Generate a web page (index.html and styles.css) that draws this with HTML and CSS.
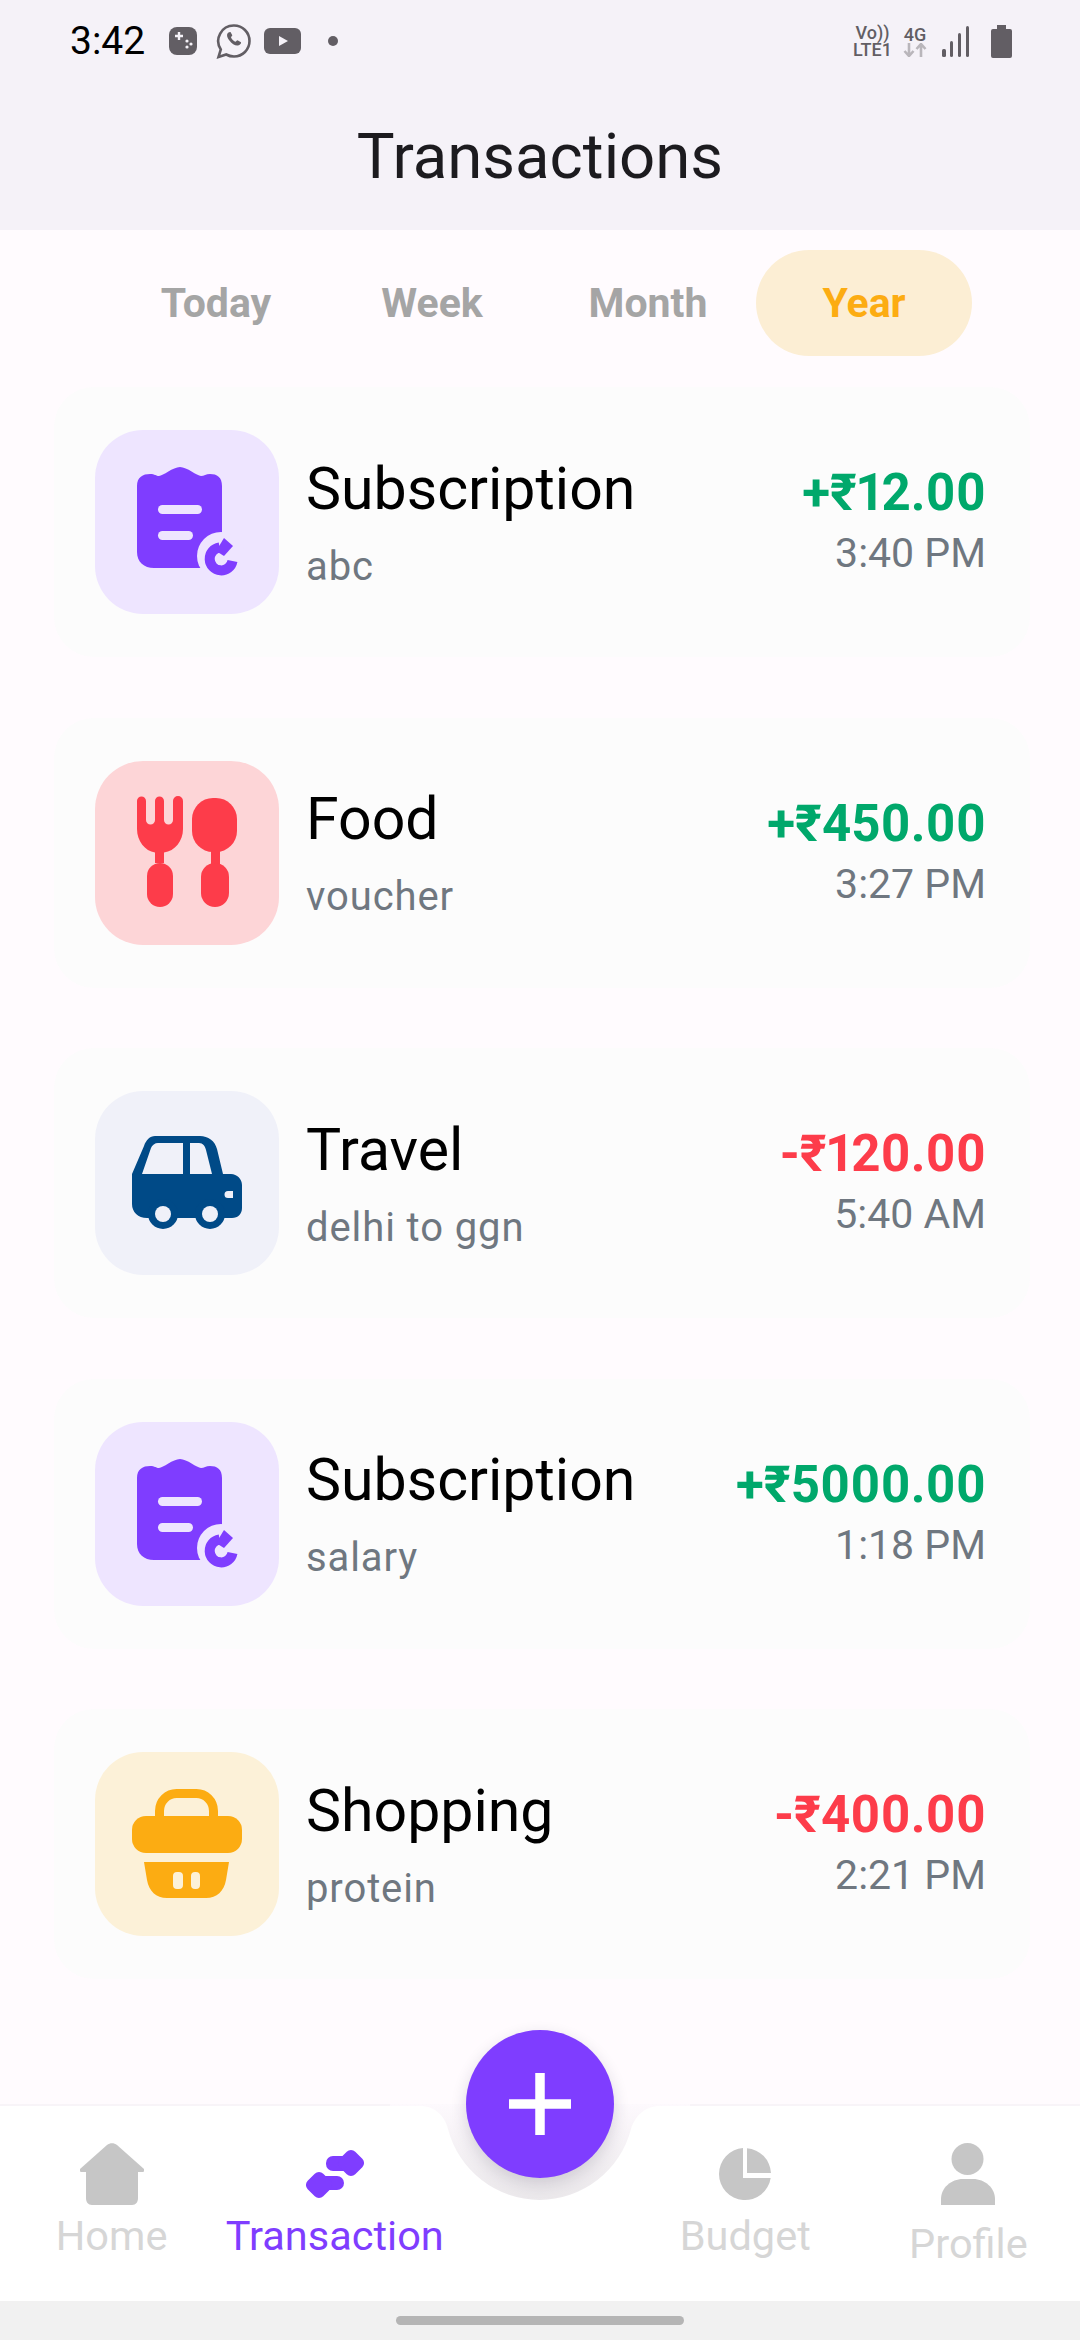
FILE: index.html
```html
<!DOCTYPE html>
<html lang="en">
<head>
  <meta charset="UTF-8">
  <meta name="viewport" content="width=device-width, initial-scale=1.0">
  <title>Transactions</title>
  <link rel="stylesheet" href="styles.css">
</head>
<body>
  <div class="app">
    <header class="top">
      <div class="status-bar">
        <div class="status-left">
          <span class="clock">3:42</span>
          <svg class="st-game" width="28" height="28" viewBox="0 0 28 28"><rect width="28" height="28" rx="8" fill="#625e64"/><path d="M6 9h8M10 5v8" stroke="#f5f2f8" stroke-width="2.4"/><circle cx="18" cy="14" r="1.6" fill="#f5f2f8"/><circle cx="22" cy="17" r="1.6" fill="#f5f2f8"/><circle cx="18" cy="20" r="1.6" fill="#f5f2f8"/></svg>
          <svg class="st-wa" width="36" height="36" viewBox="0 0 36 36"><path d="M18 2.500a15.500 15.500 0 0 1 0 31c-3 0-5.500-.7-7.800-2L2.500 34l2.300-7.500A15.500 15.500 0 0 1 18 2.500z" fill="none" stroke="#625e64" stroke-width="2.600"/><path d="M12.500 9.500c-2 1.500-2 4 .5 7.500 3 4 6.500 6 9 5.500 2-.5 3.500-2 3-3.200l-3.500-2c-.8 0-1.300 1.500-2.300 1.500-1.500-.5-3.500-2.500-4.200-4.200 0-1 1.300-1.400 1.300-2.300l-1.800-3.300c-.6-.3-1.300 0-2 .5z" fill="#625e64"/></svg>
          <svg class="st-yt" width="37" height="26" viewBox="0 0 37 26"><rect width="37" height="26" rx="6" fill="#625e64"/><path d="M15 8l9 5-9 5z" fill="#f5f2f8"/></svg>
          <span class="st-dot"></span>
        </div>
        <div class="status-right">
          <div class="st-volte"><span>Vo))</span><span>LTE1</span></div>
          <div class="st-net">
            <span>4G</span>
            <svg width="24" height="14" viewBox="0 0 24 14"><path d="M6 0v12M1.500 8L6 13l4.500-5" fill="none" stroke="#b9b6bb" stroke-width="2.600"/><path d="M18 14V2M13.500 6L18 1l4.500 5" fill="none" stroke="#b9b6bb" stroke-width="2.600"/></svg>
          </div>
          <svg class="st-signal" width="27" height="31" viewBox="0 0 27 31"><rect x="0" y="23" width="4" height="8" rx="1.500" fill="#625e64"/><rect x="8" y="15" width="3" height="16" rx="1.500" fill="#625e64"/><rect x="16" y="7" width="3" height="24" rx="1.500" fill="#625e64"/><rect x="24" y="0" width="3" height="31" rx="1.500" fill="#625e64"/></svg>
          <svg class="st-battery" width="21" height="33" viewBox="0 0 21 33"><path d="M6 0h9v4h4a2 2 0 0 1 2 2v25a2 2 0 0 1-2 2H2a2 2 0 0 1-2-2V6a2 2 0 0 1 2-2h4z" fill="#625e64"/></svg>
        </div>
      </div>
      <h1 class="title">Transactions</h1>
    </header>

    <nav class="tabs">
      <span class="tab">Today</span>
      <span class="tab">Week</span>
      <span class="tab">Month</span>
      <span class="tab active">Year</span>
    </nav>

    <main class="list">
      <div class="card">
        <div class="icon-box purple">
          <svg width="120" height="120" viewBox="0 0 120 120"><use href="#i-sub"/></svg>
        </div>
        <div class="card-main">
          <div class="card-title">Subscription</div>
          <div class="card-sub">abc</div>
        </div>
        <div class="card-side">
          <div class="amount plus">+₹12.00</div>
          <div class="time">3:40 PM</div>
        </div>
      </div>

      <div class="card">
        <div class="icon-box red">
          <svg width="120" height="120" viewBox="0 0 120 120" fill="#fd3c4a">
            <path d="M10 8a4.500 4.500 0 0 1 9 0v19a4.500 4.500 0 0 0 9 0V8a4.500 4.500 0 0 1 9 0v19a4.500 4.500 0 0 0 9 0V8a5 5 0 0 1 10 0v28c0 12-8 22-19 23.500V70h-9V59.500C18 58 10 48 10 36z"/>
            <rect x="20" y="70" width="26" height="44" rx="13"/>
            <rect x="65" y="5" width="45" height="54" rx="21"/>
            <rect x="84" y="50" width="9" height="24"/>
            <rect x="74" y="70" width="28" height="44" rx="14"/>
          </svg>
        </div>
        <div class="card-main">
          <div class="card-title">Food</div>
          <div class="card-sub">voucher</div>
        </div>
        <div class="card-side">
          <div class="amount plus">+₹450.00</div>
          <div class="time">3:27 PM</div>
        </div>
      </div>

      <div class="card">
        <div class="icon-box blue">
          <svg width="120" height="120" viewBox="0 0 120 120">
            <path fill="#004a87" fill-rule="evenodd" d="M28 13h45c8 0 15 5 17 13l6 25h8c6 0 11 5 11 11v23c0 6-4 10-10 10H20c-9 0-15-6-15-14V51l12-28c2-6 6-10 11-10zM31 20c-3 0-6 2-7 5l-9 26h41V20zM63 20v31h22l-6-24c-1-4-3-7-7-7zM101 68a3.500 3.500 0 0 0 0 7h5v-7z"/>
            <circle cx="36" cy="91" r="15" fill="#004a87"/><circle cx="36" cy="91" r="8" fill="#f0f1f9"/>
            <circle cx="83" cy="91" r="15" fill="#004a87"/><circle cx="83" cy="91" r="8" fill="#f0f1f9"/>
          </svg>
        </div>
        <div class="card-main">
          <div class="card-title">Travel</div>
          <div class="card-sub">delhi to ggn</div>
        </div>
        <div class="card-side">
          <div class="amount minus">-₹120.00</div>
          <div class="time">5:40 AM</div>
        </div>
      </div>

      <div class="card">
        <div class="icon-box purple">
          <svg width="120" height="120" viewBox="0 0 120 120"><use href="#i-sub"/></svg>
        </div>
        <div class="card-main">
          <div class="card-title">Subscription</div>
          <div class="card-sub">salary</div>
        </div>
        <div class="card-side">
          <div class="amount plus">+₹5000.00</div>
          <div class="time">1:18 PM</div>
        </div>
      </div>

      <div class="card">
        <div class="icon-box yellow">
          <svg width="120" height="120" viewBox="0 0 120 120" fill="#fcac12">
            <path d="M32.500 36V27c0-10 8-17.500 17-17.500h20c9 0 17 7.500 17 17.500v9" fill="none" stroke="#fcac12" stroke-width="9"/>
            <rect x="5" y="32" width="110" height="37" rx="14"/>
            <path fill-rule="evenodd" d="M17 78h85l-3 18c-2 11-9 18-20 18H40c-11 0-18-7-20-18zM46 92v9a4 4 0 0 0 4 4h2a4 4 0 0 0 4-4v-9a4 4 0 0 0-4-4h-2a4 4 0 0 0-4 4zM64 92v9a4 4 0 0 0 4 4h1a4 4 0 0 0 4-4v-9a4 4 0 0 0-4-4h-1a4 4 0 0 0-4 4z"/>
          </svg>
        </div>
        <div class="card-main">
          <div class="card-title">Shopping</div>
          <div class="card-sub">protein</div>
        </div>
        <div class="card-side">
          <div class="amount minus">-₹400.00</div>
          <div class="time">2:21 PM</div>
        </div>
      </div>
    </main>

    <footer class="bottom-nav">
      <svg class="notch" width="300" height="130" viewBox="0 0 300 130">
        <defs>
          <linearGradient id="notch-fill" x1="0" y1="0" x2="0" y2="1">
            <stop offset="0" stop-color="#fdf9fd"/>
            <stop offset="1" stop-color="#ebe8eb"/>
          </linearGradient>
        </defs>
        <path d="M0 0V2H30C45 2 55 12 58 25A94.500 94.500 0 0 0 241 25C245 12 255 2 270 2H300V0z" fill="url(#notch-fill)"/>
      </svg>
      <button class="fab">
        <svg width="62" height="62" viewBox="0 0 62 62"><path d="M31 0v62M0 31h62" stroke="#fff" stroke-width="9.500"/></svg>
      </button>

      <div class="nav-item">
        <svg width="64" height="62" viewBox="0 0 64 62"><path fill="#c6c6c6" d="M27 2c3-2.500 7-2.500 10 0l27 24v1.500c0 1-.5 1.500-1.500 1.500H58v26c0 4-2 7-6 7H12c-4 0-6-3-6-7V29H1.500C.5 29 0 28.500 0 27.500V26z"/></svg>
        <span>Home</span>
      </div>
      <div class="nav-item current">
        <svg width="60" height="48" viewBox="0 0 60 48" fill="#7f3dff">
          <rect x="21" y="6" width="27" height="15" rx="7"/>
          <rect x="35" y="2" width="22" height="22" rx="6" transform="rotate(45 46 13)"/>
          <rect x="14" y="26" width="25" height="14" rx="7"/>
          <rect x="3" y="24" width="22" height="22" rx="6" transform="rotate(45 14 35)"/>
        </svg>
        <span>Transaction</span>
      </div>
      <div class="nav-gap"></div>
      <div class="nav-item">
        <svg width="52" height="52" viewBox="0 0 52 52" fill="#c6c6c6"><path d="M24 .1V30h27.700A26 26 0 1 1 24 .1z"/><path d="M28 .3A26 26 0 0 1 52 25H28z"/></svg>
        <span>Budget</span>
      </div>
      <div class="nav-item profile">
        <svg width="54" height="62" viewBox="0 0 54 62" fill="#c6c6c6"><circle cx="26.500" cy="16" r="16"/><path d="M22 36h10c12 0 22 9 22 20v6H0v-6C0 45 10 36 22 36z"/></svg>
        <span>Profile</span>
      </div>
    </footer>

    <div class="gesture-bar"><span class="handle"></span></div>
  </div>

  <svg width="0" height="0" class="defs">
    <symbol id="i-sub" viewBox="0 0 120 120">
      <path fill="#7f3dff" d="M10 24c0-9 6-12 13-12 5 0 6 2 9 2 4 0 14-9 21-9s17 9 21 9c3 0 5-2 9-2 7 0 12 3 12 12v82H27c-10 0-17-6-17-16z"/>
      <rect x="31" y="43" width="44" height="9" rx="4.500" fill="#eee5ff"/>
      <rect x="31" y="69" width="35" height="9" rx="4.500" fill="#eee5ff"/>
      <circle cx="94" cy="94" r="24" fill="#eee5ff"/>
      <circle cx="110" cy="110" r="12" fill="#eee5ff"/>
      <path d="M105.500 99a11.500 11.500 0 1 1-13-13.500" fill="none" stroke="#7f3dff" stroke-width="10"/>
      <path d="M89 89l8-13 9 8-9 10z" fill="#7f3dff"/>
    </symbol>
  </svg>
</body>
</html>
```
FILE: styles.css
```css
* {
  box-sizing: border-box;
}
body {
  margin: 0;
  background: #fffbfe;
  font-family: 'Roboto', sans-serif;
}
.app {
  width: 1080px;
  height: 2340px;
  display: flex;
  flex-direction: column;
  overflow: hidden;
}
.defs {
  position: absolute;
}

.top {
  height: 230px;
  background: #f5f2f8;
  padding: 21px 68px 0 70px;
}
.status-bar {
  height: 40px;
  display: flex;
  justify-content: space-between;
  align-items: center;
}
.status-left {
  display: flex;
  align-items: center;
}
.clock {
  width: 99px;
  font-size: 39px;
  color: #000;
}
.st-wa {
  margin-left: 19px;
}
.st-yt {
  margin-left: 12px;
}
.st-dot {
  width: 10px;
  height: 10px;
  margin-left: 27px;
  border-radius: 50%;
  background: #625e64;
}
.status-right {
  display: flex;
  align-items: center;
  color: #625e64;
  font-size: 18px;
  font-weight: 500;
  line-height: 17px;
}
.st-volte, .st-net {
  display: flex;
  flex-direction: column;
  align-items: center;
}
.st-net {
  margin-left: 11px;
}
.st-signal {
  margin-left: 15px;
}
.st-battery {
  margin-left: 22px;
}
.title {
  margin: 61px 0 0 -70px;
  width: 1080px;
  text-align: center;
  font-size: 63.500px;
  font-weight: 400;
  line-height: 70px;
  color: #1c1b1f;
}

.tabs {
  height: 106px;
  margin-top: 20px;
  padding-left: 108px;
  display: flex;
  align-items: center;
}
.tab {
  width: 216px;
  height: 106px;
  display: flex;
  align-items: center;
  justify-content: center;
  font-size: 41px;
  font-weight: 700;
  color: #a5a5a5;
}
.tab.active {
  border-radius: 53px;
  background: #fceed4;
  color: #fcac12;
}

.list {
  flex: 1;
  padding: 31px 50px 0 54px;
  display: flex;
  flex-direction: column;
  gap: 60.500px;
}
.card {
  height: 270px;
  padding: 0 44px 0 41px;
  display: flex;
  align-items: center;
  border-radius: 40px;
  background: #fcfcfc;
}
.icon-box {
  width: 184px;
  height: 184px;
  flex: none;
  display: flex;
  align-items: center;
  justify-content: center;
  border-radius: 48px;
}
.icon-box.purple { background: #eee5ff; }
.icon-box.red { background: #fdd5d7; }
.icon-box.blue { background: #f0f1f9; }
.icon-box.yellow { background: #fcf1d8; }
.card-main {
  flex: 1;
  margin-left: 27px;
}
.card-title {
  font-size: 59px;
  line-height: 66px;
  color: #000;
}
.card-sub {
  margin-top: 23px;
  font-size: 40px;
  line-height: 44px;
  letter-spacing: 0.9px;
  color: #6f7780;
}
.card-side {
  padding-bottom: 3px;
  text-align: right;
}
.amount {
  font-size: 51px;
  line-height: 54px;
  font-weight: 700;
  font-variant-numeric: proportional-nums;
}
.amount.plus { color: #00a86b; }
.amount.minus { color: #fd3c4a; }
.time {
  margin-top: 11px;
  font-size: 41px;
  line-height: 44px;
  color: #6f7780;
}

.bottom-nav {
  position: relative;
  height: 197px;
  display: flex;
  background: #fff;
  border-top: 2px solid #f8f4f8;
}
.notch {
  position: absolute;
  left: 390px;
  top: -2px;
}
.fab {
  position: absolute;
  left: 466px;
  top: -76px;
  width: 148px;
  height: 148px;
  padding: 0;
  border: 0;
  border-radius: 50%;
  display: flex;
  align-items: center;
  justify-content: center;
  background: #7f3dff;
  box-shadow: 0 6px 16px rgba(40, 30, 60, 0.16);
}
.nav-item {
  width: 224px;
  padding-top: 37px;
  display: flex;
  flex-direction: column;
  align-items: center;
  font-size: 41.500px;
  color: #d6d6d6;
}
.nav-item svg {
  height: 62px;
}
.nav-item span {
  margin-top: 6px;
  line-height: 50px;
}
.nav-item.current {
  color: #7f3dff;
}
.nav-gap {
  width: 188px;
}
.nav-item.profile span {
  margin-top: 14px;
}
.gesture-bar {
  height: 39px;
  display: flex;
  align-items: center;
  justify-content: center;
  background: #f1f1f1;
}
.handle {
  width: 288px;
  height: 9px;
  border-radius: 5px;
  background: #b5b5b5;
}
```
